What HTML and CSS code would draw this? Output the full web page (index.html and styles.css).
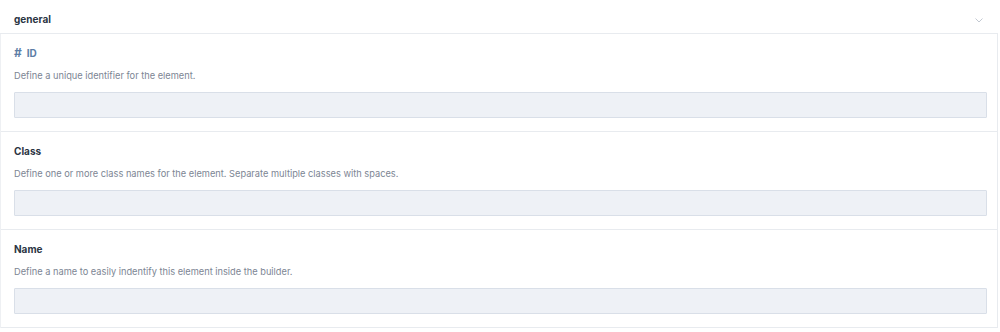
FILE: index.html
```html
<!DOCTYPE html>
<html lang="en">
<head>
  <meta charset="UTF-8">
  <meta name="viewport" content="width=device-width, initial-scale=1.0">
  <title>Element settings</title>
  <link rel="stylesheet" href="styles.css">
</head>
<body>
  <div class="group">
    <div class="group-head">
      <span class="group-title">general</span>
      <svg class="chevron" width="8" height="5" viewBox="0 0 8 5"><path d="M0.5 0.5 L4 4 L7.5 0.5" fill="none" stroke="#c3c9d2" stroke-width="1"/></svg>
    </div>
    <div class="group-body">
      <div class="field">
        <label class="field-label field-label--id"><span class="hash">#</span>ID</label>
        <p class="field-desc">Define a unique identifier for the element.</p>
        <input class="field-input" type="text">
      </div>
      <div class="field">
        <label class="field-label">Class</label>
        <p class="field-desc">Define one or more class names for the element. Separate multiple classes with spaces.</p>
        <input class="field-input" type="text">
      </div>
      <div class="field">
        <label class="field-label">Name</label>
        <p class="field-desc">Define a name to easily indentify this element inside the builder.</p>
        <input class="field-input" type="text">
      </div>
    </div>
  </div>
</body>
</html>
```

FILE: styles.css
```css
body {
  margin: 0;
  background: #fff;
  font-family: Inter, "Noto Sans", Arial, sans-serif;
  color: #2c3e50;
}
.group {
  width: 998px;
}
.group-head {
  height: 33px;
  display: flex;
  align-items: center;
  justify-content: space-between;
  padding: 0 15px 0 14px;
  border-bottom: 1px solid #e8ebef;
}
.group-title {
  font-size: 10px;
  font-weight: 700;
  color: #2b3543;
  margin-top: 5px;
}
.chevron {
  margin-top: 8px;
}
.group-body {
  border-left: 1px solid #eef0f3;
  border-right: 1px solid #e8ebef;
}
.field {
  padding: 13px 11px 13px 13px;
  border-bottom: 1px solid #e8ebef;
  height: 71px;
}
.field-label {
  display: block;
  font-size: 10px;
  font-weight: 700;
  color: #2b3543;
  line-height: 12px;
}
.field-label--id {
  color: #5d7ea6;
}
.hash {
  font-size: 12px;
  margin-right: 5px;
}
.field-desc {
  margin: 11px 0 10px;
  font-size: 9.25px;
  line-height: 12px;
  color: #7c8593;
}
.field-input {
  display: block;
  box-sizing: border-box;
  width: 973px;
  height: 26px;
  margin: 0;
  border: 1px solid #d9dfe8;
  background: #eef1f6;
  border-radius: 1px;
}
```
